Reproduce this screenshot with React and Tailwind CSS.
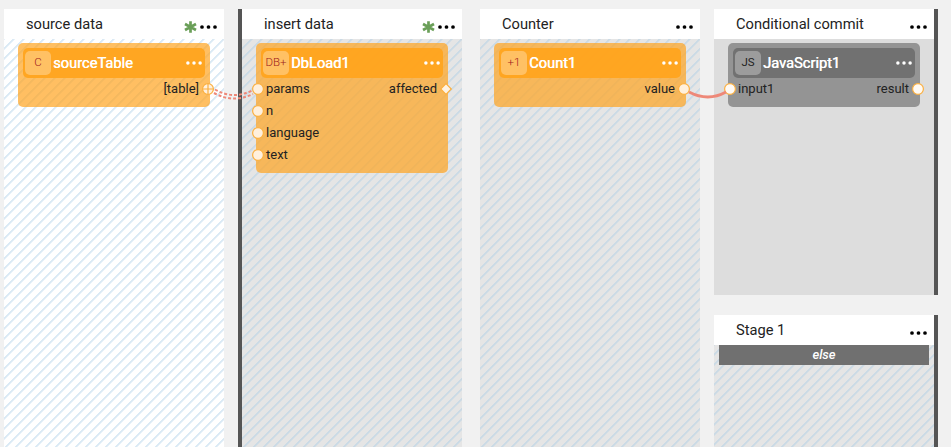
const stripes =
  'bg-[repeating-linear-gradient(135deg,#a5cbe666_0px,#a5cbe666_0.6px,transparent_0.9px,transparent_5.7px,#a5cbe666_6px,#a5cbe666_7.071px)]';

function Dots({ className = '' }) {
  return (
    <svg className={className} width="17" height="4" viewBox="0 0 17 4" fill="currentColor">
      <circle cx="2" cy="2" r="1.85" />
      <circle cx="8.5" cy="2" r="1.85" />
      <circle cx="15" cy="2" r="1.85" />
    </svg>
  );
}

function Asterisk() {
  return (
    <svg className="mt-[6px] mr-[3px]" width="13" height="12" viewBox="0 0 13 12" stroke="#6a9f58" strokeWidth="2.7">
      <path d="M6.5 0.3v11.4M1 3l11 6M12 3L1 9" />
    </svg>
  );
}

function Stage({ title, star, body, striped = true, bar, className = '', children }) {
  return (
    <section className={`flex flex-col ${bar === 'left' ? 'border-l-4 border-[#555]' : ''} ${bar === 'right' ? 'border-r-4 border-[#555]' : ''} ${className}`}>
      <header className="flex h-[30px] shrink-0 items-center bg-white pl-[22px] pr-[7px]">
        <h2 className="flex-1 whitespace-nowrap text-[14.667px] leading-[30px] text-[#222]">{title}</h2>
        {star && <Asterisk />}
        <Dots className="mt-[6px] text-black" />
      </header>
      <div className={`flex-1 ${body} ${striped ? stripes : ''}`}>{children}</div>
    </section>
  );
}

function Port({ shape = 'circle', gray }) {
  return (
    <svg className="shrink-0" width="14" height="14" viewBox="0 0 14 14" stroke="#fbb040" strokeWidth="1.2">
      {shape === 'diamond' ? (
        <path d="M7 1.7L12.3 7L7 12.3L1.7 7Z" fill="#fff3e3" />
      ) : (
        <circle cx="7" cy="7" r="5.4" fill={gray ? '#fffaf4' : '#fff0dd'} />
      )}
      {shape === 'table' && <path d="M7 1.5v11M1.5 7h11" />}
    </svg>
  );
}

function Node({ icon, name, inputs = [], output, shape, gray, height }) {
  return (
    <article className={`relative top-1 ml-[14px] w-48 rounded-[5px] pt-[5px] ${gray ? 'bg-[#949494]' : 'bg-[#ffa41f]/70'} ${height}`}>
      <div className={`mx-[5px] flex h-[30px] items-center rounded-[5px] pl-[2px] pr-[3px] ${gray ? 'bg-[#717171]' : 'bg-[#ffa41f]/95'}`}>
        <span className={`flex h-6 w-[26px] items-center justify-center rounded-[5px] text-[11.5px] ${gray ? 'bg-white/30 text-[#222]' : 'bg-white/30 font-light text-[#a01c1c]'}`}>{icon}</span>
        <span className="ml-[2px] flex-1 text-[14.667px] leading-[22px] text-white [text-shadow:0.4px_0_0_white]">{name}</span>
        <Dots className="h-[4px] w-[16px] text-white" />
      </div>
      <div className="flex justify-between text-[13px] leading-[22px] text-[#222]">
        <div className="-ml-[5px]">
          {inputs.map((label) => (
            <div key={label} className="flex h-[22px] items-center gap-px">
              <Port gray={gray} />
              <span>{label}</span>
            </div>
          ))}
        </div>
        <div className="-mr-[5px] flex h-[22px] items-center gap-[2px]">
          <span>{output}</span>
          <Port shape={shape} gray={gray} />
        </div>
      </div>
    </article>
  );
}

export default function App() {
  return (
    <main className="relative flex h-[447px] w-[951px] overflow-hidden bg-[#f1f1f1] pl-1 pt-[9px] font-['Roboto',sans-serif]">
      <Stage title="source data" star body="bg-white" className="w-[220px]">
        <Node icon="C" name="sourceTable" output="[table]" shape="table" height="h-16" />
      </Stage>
      <Stage title="insert data" star body="bg-[#e5e5e5]" bar="left" className="ml-[14px] w-[224px]">
        <Node icon="DB+" name="DbLoad1" inputs={['params', 'n', 'language', 'text']} output="affected" shape="diamond" height="h-[130px]" />
      </Stage>
      <Stage title="Counter" body="bg-[#e5e5e5]" className="ml-[18px] w-[220px]">
        <Node icon="+1" name="Count1" output="value" height="h-16" />
      </Stage>
      <div className="ml-[14px] flex w-[224px] flex-col gap-5">
        <Stage title="Conditional commit" body="bg-[#ddd]" striped={false} bar="right" className="h-[286px]">
          <Node gray icon="JS" name="JavaScript1" inputs={['input1']} output="result" height="h-16" />
        </Stage>
        <Stage title="Stage 1" body="bg-[#e5e5e5]" bar="right" className="flex-1">
          <div className="mx-[5px] h-5 bg-[#707070] text-center text-[13px] font-medium italic leading-5 text-white">else</div>
        </Stage>
      </div>
      <svg className="pointer-events-none absolute inset-0" width="951" height="447" fill="none" stroke="#ee8878">
        <path d="M215 89.5Q233 100 252 90.5M214 93Q233 103.5 253 94" strokeWidth="2" strokeDasharray="3 2" />
        <path d="M689 92Q708 102 726 92" strokeWidth="2.8" />
      </svg>
    </main>
  );
}
